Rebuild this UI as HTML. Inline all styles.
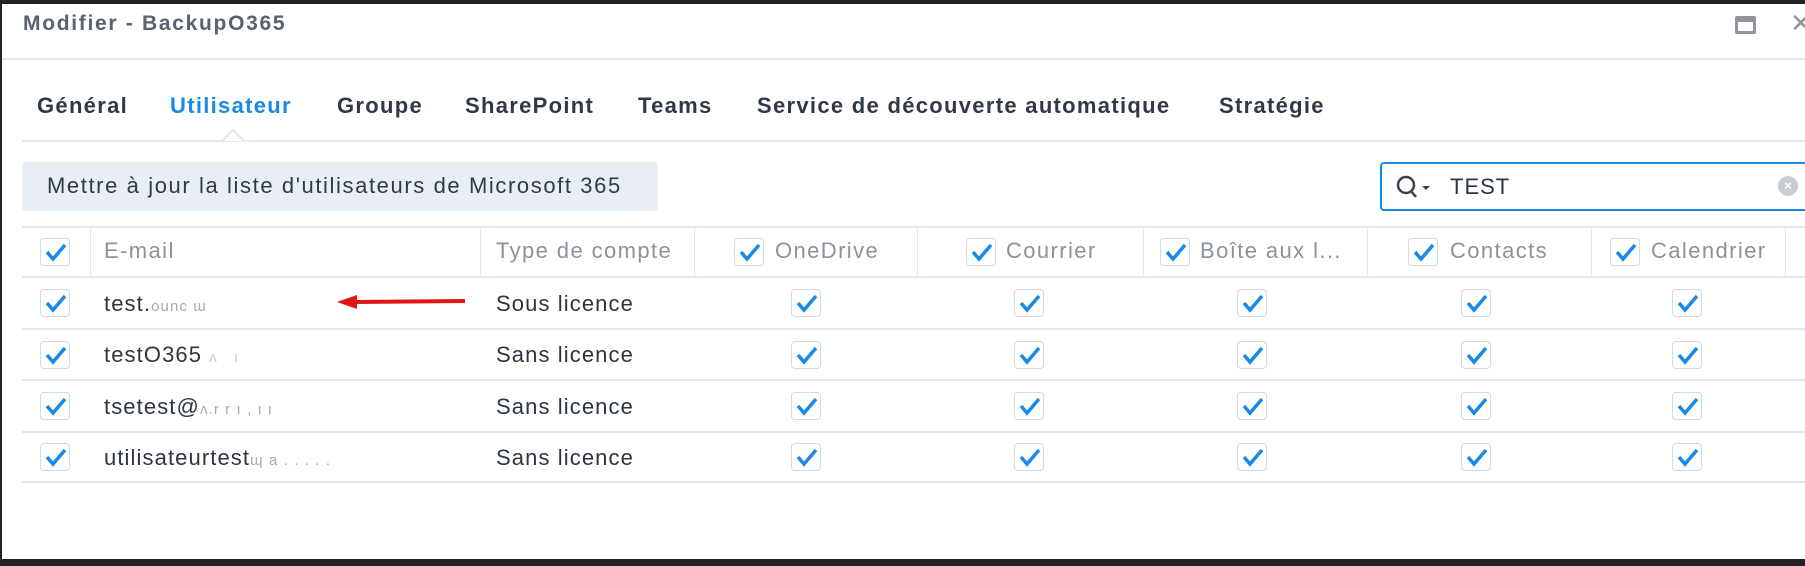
<!DOCTYPE html>
<html><head><meta charset="utf-8"><style>
*{margin:0;padding:0;box-sizing:border-box}
body{width:1805px;height:566px;overflow:hidden;background:#fff;position:relative;font-family:"Liberation Sans",sans-serif;color:#414b55}
.a{position:absolute;white-space:nowrap}
.tab{position:absolute;top:93px;font-size:22px;font-weight:bold;color:#303a46;letter-spacing:1.3px}
.hl{position:absolute;height:2px;background:#e3e8ee}
.vl{position:absolute;width:1px;background:#e3e8ee;top:228px;height:48px}
.cb{position:absolute;border:1px solid #d4dae2;border-radius:4px;background:#fff}
.cb svg{position:absolute}
.h{position:absolute;top:238px;font-size:22px;color:#8a939c;letter-spacing:1.4px}
.t{position:absolute;font-size:22px;color:#2c3540;letter-spacing:1.1px}
</style></head><body>
<div class="a" style="left:0;top:0;width:1805px;height:4px;background:#222"></div>
<div class="a" style="left:0;top:0;width:2px;height:566px;background:#222"></div>
<div class="a" style="left:0;top:559px;width:1805px;height:7px;background:#222"></div>
<div class="a" style="left:23px;top:12px;font-size:21px;font-weight:bold;color:#5a626c;letter-spacing:1.7px">Modifier - BackupO365</div>
<div class="a" style="left:1735px;top:16px;width:21px;height:18px;border:3px solid #8e959d;border-top-width:6px;border-radius:2px"></div>
<div class="a" style="left:1790px;top:8px;font-size:26px;color:#8e959d">✕</div>
<div class="hl" style="left:2px;top:58px;width:1803px"></div>
<div class="tab" style="left:37px">Général</div>
<div class="tab" style="left:170px;color:#1a8ae6">Utilisateur</div>
<div class="tab" style="left:337px">Groupe</div>
<div class="tab" style="left:465px">SharePoint</div>
<div class="tab" style="left:638px">Teams</div>
<div class="tab" style="left:757px">Service de découverte automatique</div>
<div class="tab" style="left:1219px">Stratégie</div>
<div class="hl" style="left:22px;top:140px;width:1783px"></div>
<svg class="a" style="left:222px;top:128px" width="22" height="14"><path d="M0 13 L11 2 L22 13" fill="#fff" stroke="#e3e8ee" stroke-width="2"/></svg>
<div class="a" style="left:22px;top:162px;width:636px;height:49px;background:#e9eef4;border-radius:4px;font-size:22px;color:#303a46;padding:11px 0 0 25px;letter-spacing:1.6px">Mettre à jour la liste d'utilisateurs de Microsoft 365</div>
<div class="a" style="left:1380px;top:162px;width:440px;height:49px;border:2px solid #1a8ae6;border-radius:4px"></div>
<svg class="a" style="left:1395px;top:174px" width="40" height="30"><circle cx="11" cy="11" r="8" fill="none" stroke="#3a424c" stroke-width="2.5"/><path d="M16 17 L21 23" stroke="#3a424c" stroke-width="2.5"/><path d="M27 12 L35 12 L31 16Z" fill="#3a424c"/></svg>
<div class="a" style="left:1450px;top:174px;font-size:22px;color:#2c3540;letter-spacing:1px">TEST</div>
<div class="a" style="left:1778px;top:176px;width:20px;height:20px;border-radius:50%;background:#c9cdd2;color:#fff;font-size:13px;text-align:center;line-height:20px;font-weight:bold">×</div>
<div class="hl" style="left:22px;top:226px;width:1783px"></div>
<div class="hl" style="left:22px;top:276px;width:1783px"></div>
<div class="hl" style="left:22px;top:328px;width:1783px"></div>
<div class="hl" style="left:22px;top:379px;width:1783px"></div>
<div class="hl" style="left:22px;top:431px;width:1783px"></div>
<div class="hl" style="left:22px;top:481px;width:1783px"></div>
<div class="vl" style="left:90px"></div><div class="vl" style="left:480px"></div><div class="vl" style="left:694px"></div><div class="vl" style="left:917px"></div><div class="vl" style="left:1143px"></div><div class="vl" style="left:1367px"></div><div class="vl" style="left:1591px"></div><div class="vl" style="left:1785px"></div>
<div class="h" style="left:104px">E-mail</div>
<div class="h" style="left:496px">Type de compte</div>
<div class="h" style="left:775px">OneDrive</div>
<div class="h" style="left:1006px">Courrier</div>
<div class="h" style="left:1200px">Boîte aux l...</div>
<div class="h" style="left:1450px">Contacts</div>
<div class="h" style="left:1651px">Calendrier</div>
<div class="t" style="left:104px;top:291px">test.<span style="color:#aaa;font-size:15px">ounc ɯ</span></div>
<div class="t" style="left:104px;top:342px">testO365 <span style="color:#ccc;font-size:15px">ʌ &nbsp; ı</span></div>
<div class="t" style="left:104px;top:394px">tsetest@<span style="color:#aaa;font-size:15px">ᴧ.r r ı , ı ι</span></div>
<div class="t" style="left:104px;top:445px">utilisateurtest<span style="color:#aaa;font-size:15px">ɰ a . . . . .</span></div>
<div class="t" style="left:496px;top:291px">Sous licence</div>
<div class="t" style="left:496px;top:342px">Sans licence</div>
<div class="t" style="left:496px;top:394px">Sans licence</div>
<div class="t" style="left:496px;top:445px">Sans licence</div>
<svg class="a" style="left:335px;top:292px" width="135" height="18"><path d="M130 9 L20 10" stroke="#e01515" stroke-width="4"/><path d="M2 10 L22 3 L22 17Z" fill="#e01515"/></svg>
<div id="cbs"></div>
<script>
var xs=[{x:55,y:[252,303,355,406,457]},{x:749,y:[252]},{x:981,y:[252]},{x:1175,y:[252]},{x:1423,y:[252]},{x:1625,y:[252]}];
[806,1029,1252,1476,1687].forEach(function(x){xs.push({x:x,y:[303,355,406,457]})});
var h='';xs.forEach(function(c){c.y.forEach(function(y){h+='<div class="cb" style="left:'+(c.x-15)+'px;top:'+(y-14)+'px;width:30px;height:28px"><svg width="26" height="20" style="left:2px;top:3px"><path d="M4 10 L10 17 L22 3" fill="none" stroke="#1a8ae6" stroke-width="3.5"/></svg></div>'})});
document.getElementById('cbs').innerHTML=h;
</script>
</body></html>
